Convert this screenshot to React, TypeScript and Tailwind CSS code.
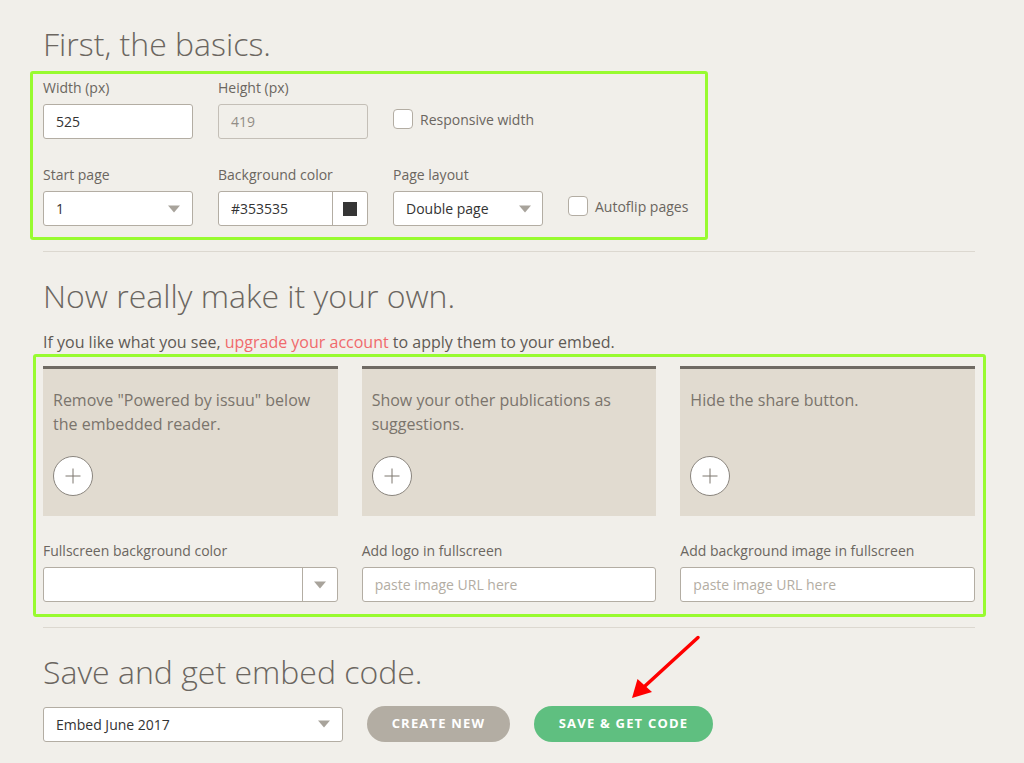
import React from "react";

const Arrow = () => (
  <svg width="12" height="8" viewBox="0 0 10 6" className="shrink-0">
    <path d="M0 0 L10 0 L5 6 Z" fill="#a8a39b" />
  </svg>
);

const Label = ({ children }: { children: React.ReactNode }) => (
  <div className="h-5 text-[14px] leading-5 text-[#6b6660] mb-1.5 whitespace-nowrap">{children}</div>
);

const Checkbox = ({ label }: { label: string }) => (
  <div className="flex items-center h-5 mt-[31px]">
    <div className="w-5 h-5 rounded-[4px] border border-[#b3ada3] bg-white shrink-0" />
    <span className="ml-[7px] text-[14px] text-[#6b6660] whitespace-nowrap">{label}</span>
  </div>
);

const Plus = () => (
  <div className="w-10 h-10 rounded-full bg-white border border-[#8a857e] flex items-center justify-center">
    <svg width="16" height="16" viewBox="0 0 16 16">
      <path d="M8 0.5 V15.5 M0.5 8 H15.5" stroke="#7d776f" strokeWidth="1" />
    </svg>
  </div>
);

const Card = ({ text }: { text: string }) => (
  <div className="h-[150px] bg-[#e1dbd0] border-t-[3px] border-[#6f6a63] pt-[19px] px-[10px]">
    <div className="h-12 text-[16px] leading-6 text-[#7a746c]">{text}</div>
    <div className="mt-5">
      <Plus />
    </div>
  </div>
);

export default function App() {
  return (
    <div
      className="relative w-[1024px] h-[763px] overflow-hidden bg-[#f1efea]"
      style={{ fontFamily: "'Open Sans', 'Liberation Sans', sans-serif" }}
    >
      <div className="pl-[43px] pr-[49px] pt-[24px]">
        <h1 className="h-10 text-[32px] leading-10 font-light text-[#6b6660] whitespace-nowrap">First, the basics.</h1>

        <div className="relative mt-[14px]">
          <div className="absolute left-[-13px] top-[-7px] w-[678px] h-[169px] border-[3px] border-[#98fb30] rounded-[3px] pointer-events-none" />
          <div className="flex gap-[25px]">
            <div className="w-[150px]">
              <Label>Width (px)</Label>
              <div className="h-[35px] bg-white border border-[#b3ada3] rounded-[3px] flex items-center px-[12px] text-[14px] text-[#333]">525</div>
            </div>
            <div className="w-[150px]">
              <Label>Height (px)</Label>
              <div className="h-[35px] border border-[#c4bfb7] rounded-[3px] flex items-center px-[12px] text-[14px] text-[#928d86]">419</div>
            </div>
            <div>
              <Checkbox label="Responsive width" />
            </div>
          </div>
          <div className="flex gap-[25px] mt-[26px]">
            <div className="w-[150px]">
              <Label>Start page</Label>
              <div className="h-[35px] bg-white border border-[#b3ada3] rounded-[3px] flex items-center justify-between pl-[12px] pr-[12px] text-[14px] text-[#333]">
                <span>1</span>
                <Arrow />
              </div>
            </div>
            <div className="w-[150px]">
              <Label>Background color</Label>
              <div className="h-[35px] bg-white border border-[#b3ada3] rounded-[3px] flex text-[14px] text-[#333]">
                <div className="flex-1 flex items-center pl-[12px]">#353535</div>
                <div className="w-[35px] border-l border-[#b3ada3] flex items-center justify-center">
                  <div className="w-[14px] h-[14px] bg-[#353535]" />
                </div>
              </div>
            </div>
            <div className="w-[150px]">
              <Label>Page layout</Label>
              <div className="h-[35px] bg-white border border-[#b3ada3] rounded-[3px] flex items-center justify-between pl-[12px] pr-[11px] text-[14px] text-[#333]">
                <span>Double page</span>
                <Arrow />
              </div>
            </div>
            <div>
              <Checkbox label="Autoflip pages" />
            </div>
          </div>
        </div>

        <div className="mt-[25px] h-px bg-[#dcd8d0]" />

        <h2 className="mt-[24px] h-10 text-[32px] leading-10 font-light text-[#6b6660] whitespace-nowrap">Now really make it your own.</h2>
        <p className="mt-[14px] h-6 text-[16px] leading-6 text-[#5f5a55] whitespace-nowrap">
          If you like what you see, <span className="text-[#f06a6c]">upgrade your account</span> to apply them to your embed.
        </p>

        <div className="relative mt-[12px]">
          <div className="absolute left-[-10px] top-[-12px] w-[953px] h-[263px] border-[3px] border-[#98fb30] rounded-[3px] pointer-events-none" />
          <div className="grid grid-cols-3 gap-6">
            <Card text={'Remove "Powered by issuu" below the embedded reader.'} />
            <Card text="Show your other publications as suggestions." />
            <Card text="Hide the share button." />
          </div>
          <div className="grid grid-cols-3 gap-6 mt-[25px]">
            <div>
              <Label>Fullscreen background color</Label>
              <div className="h-[35px] bg-white border border-[#b3ada3] rounded-[3px] flex">
                <div className="flex-1" />
                <div className="w-[35px] border-l border-[#b3ada3] flex items-center justify-center">
                  <Arrow />
                </div>
              </div>
            </div>
            <div>
              <Label>Add logo in fullscreen</Label>
              <div className="h-[35px] bg-white border border-[#b3ada3] rounded-[3px] flex items-center px-[12px] text-[14px] text-[#b3ada3]">paste image URL here</div>
            </div>
            <div>
              <Label>Add background image in fullscreen</Label>
              <div className="h-[35px] bg-white border border-[#b3ada3] rounded-[3px] flex items-center px-[12px] text-[14px] text-[#b3ada3]">paste image URL here</div>
            </div>
          </div>
        </div>

        <div className="mt-[25px] h-px bg-[#dcd8d0]" />

        <h2 className="mt-[24px] h-10 text-[32px] leading-10 font-light text-[#6b6660] whitespace-nowrap">Save and get embed code.</h2>
        <div className="mt-[14px] flex items-center gap-6">
          <div className="w-[300px] h-[35px] bg-white border border-[#b3ada3] rounded-[3px] flex items-center justify-between pl-[12px] pr-[12px] text-[14px] text-[#333]">
            <span>Embed June 2017</span>
            <Arrow />
          </div>
          <button className="h-[36px] w-[143px] rounded-full bg-[#b3ada3] text-white text-[13px] font-bold tracking-[1.2px] uppercase">Create new</button>
          <button className="h-[36px] w-[179px] rounded-full bg-[#5fbf80] text-white text-[13px] font-bold tracking-[1.2px] uppercase">Save &amp; get code</button>
        </div>
      </div>

      <svg className="absolute left-[620px] top-[630px]" width="90" height="80" viewBox="620 630 90 80">
        <line x1="698" y1="637.5" x2="645" y2="686" stroke="#ff0000" strokeWidth="3.5" strokeLinecap="round" />
        <polygon points="632,698 637.5,679 652,692" fill="#ff0000" />
      </svg>
    </div>
  );
}
